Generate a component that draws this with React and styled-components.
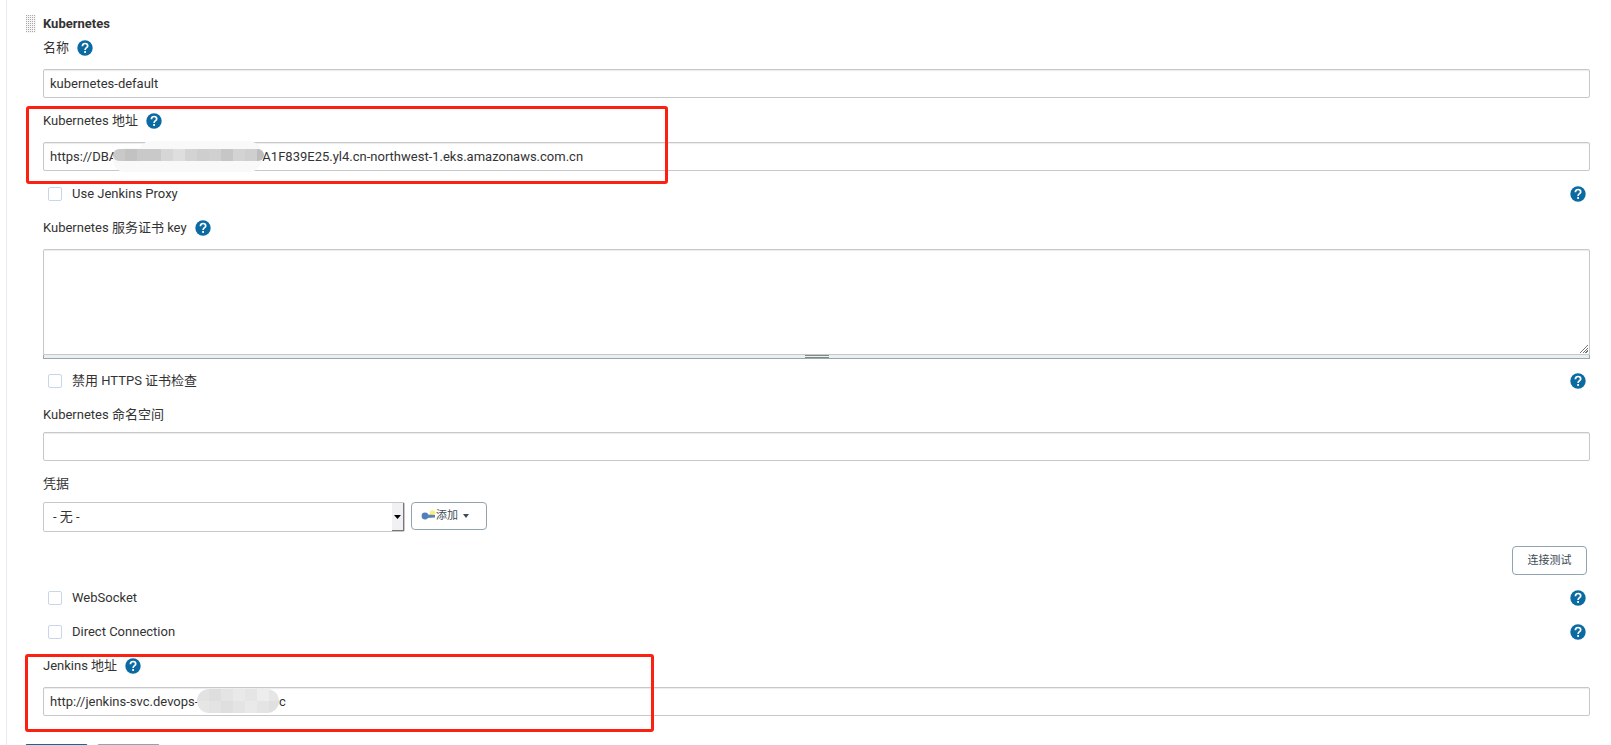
import React from 'react';
import styled, { createGlobalStyle } from 'styled-components';

const GlobalStyles = createGlobalStyle`
    * {
        box-sizing: border-box;
    }

    body {
        margin: 0;
        background: white;
        color: #333;
        font-family: Roboto, 'Noto Sans CJK SC', sans-serif;
        font-size: 13px;
        line-height: 18px;
        overflow: hidden;
    }

    input, select, textarea, button {
        font: inherit;
        color: inherit;
        margin: 0;
    }
`

const Page = styled.div`
    margin-left: 6px;
    padding: 15px 21px 0 19px;
    border-left: 1px solid #e6ecef;
`

const Block = styled.form`
    display: flex;
    align-items: flex-start;
    gap: 7px;
`

const Handle = styled.svg`
    flex: none;
    width: 10px;
    height: 18px;
`

const Fields = styled.div`
    flex: 1;
    min-width: 0;
`

const Title = styled.h3`
    margin: 0;
    height: 21px;
    font-size: 13px;
    font-weight: 700;
    line-height: 18px;
`

const Field = styled.div`
    position: relative;
    margin-bottom: ${(props) => props.$space || '11px'};
`

const LabelRow = styled.div`
    display: flex;
    align-items: center;
    gap: 8px;
    height: 24px;
    margin-bottom: ${(props) => (props.$compact ? '5px' : '9px')};
`

const TextInput = styled.input`
    display: block;
    width: 100%;
    height: 29px;
    padding: 0 6px;
    border: 1px solid #c8c8c8;
    border-radius: 2px;
    box-shadow: inset 0 1px 1px #ececec;
    background: white;
`

const TextArea = styled.textarea`
    display: block;
    width: 100%;
    height: 106px;
    padding: 6px;
    border: 1px solid #c8c8c8;
    border-radius: 2px 2px 0 0;
    box-shadow: inset 0 1px 1px #ececec;
    resize: vertical;

    &::-webkit-resizer {
        background:
            linear-gradient(135deg, white 50%, transparent 50%) right 1px bottom 1px / 10px 10px no-repeat,
            repeating-linear-gradient(135deg, #777 0 1px, white 1px 2px) right 1px bottom 1px / 10px 10px no-repeat;
    }
`

const Grip = styled.div`
    display: flex;
    justify-content: center;
    height: 4px;
    border: 1px solid #98a6ad;
    border-top: 0;
    background: #eaeff2;

    &::after {
        content: '';
        width: 24px;
        border-top: 1px solid #7f8c85;
        border-bottom: 1px solid #7f8c85;
    }
`

const CheckRow = styled.div`
    display: flex;
    align-items: center;
    height: 24px;
    margin-bottom: 10px;
    padding: 0 4px 0 5px;
`

const CheckLabel = styled.label`
    flex: 1;
    padding-left: 10px;
`

const Checkbox = styled.input`
    appearance: none;
    width: 14px;
    height: 14px;
    border: 1px solid #cbd5ea;
    border-radius: 2px;
    background: white;

    &:checked {
        background: #0b6aa2;
    }
`

const HelpLink = styled.a`
    display: flex;
`

const Credentials = styled.div`
    display: flex;
    align-items: flex-start;
    gap: 6px;
    padding-top: 1px;
`

const SelectBox = styled.div`
    position: relative;
    width: 362px;
`

const Select = styled.select`
    appearance: none;
    display: block;
    width: 100%;
    height: 30px;
    padding: 0 20px 0 9px;
    border: 1px solid #c8c8c8;
    border-radius: 2px;
    background: white;
`

const SelectArrow = styled.span`
    position: absolute;
    top: 1px;
    right: 1px;
    bottom: 1px;
    display: flex;
    align-items: center;
    justify-content: center;
    width: 12px;
    border-right: 1px solid #777;
    border-bottom: 1px solid #777;
    background: #f1f1f4;
    pointer-events: none;
`

const Button = styled.button`
    display: flex;
    align-items: center;
    justify-content: center;
    width: 75px;
    height: 29px;
    padding: 0;
    border: 1px solid #8fa3b0;
    border-radius: 4px;
    background: white;
    color: #404b55;
    font-size: 11px;
`

const AddButton = styled(Button)`
    justify-content: flex-start;
    width: 76px;
    height: 28px;
    padding-left: 9px;
`

const Caret = styled.svg`
    margin-left: 5px;
`

const TestRow = styled.div`
    display: flex;
    justify-content: flex-end;
    margin: 14px 3px 11px 0;
`

const Highlight = styled.div`
    position: absolute;
    top: ${(props) => props.$top};
    left: ${(props) => props.$left};
    width: ${(props) => props.$width};
    height: 78px;
    border: 3px solid #fc2013;
    border-radius: 3px;
    pointer-events: none;
`

const Mosaic = styled.svg`
    position: absolute;
    left: ${(props) => props.$left};
    bottom: -2px;
    pointer-events: none;
`

const Footer = styled.div`
    display: flex;
    gap: 9px;
    padding-top: 17px;
    margin-left: -1px;
`

const FooterButton = styled.button`
    width: 63px;
    height: 28px;
    border: 1px solid ${(props) => (props.$primary ? '#0b6aa2' : '#8fa3b0')};
    border-radius: 2px;
    background: ${(props) => (props.$primary ? '#0b6aa2' : 'white')};
`

const addressMosaic = ['#c9c9c9', '#c2c2c2', '#c9c9c9', '#c9c9c9', '#d6d6d6', '#dedede', '#d3d3d3', '#cecece', '#d0d0d0', '#c6c6c6', '#d3d3d3', '#cfcfcf', '#bdbdbd'];

const jenkinsMosaic = [
    ['#e2e2e2', '#dedede', '#e4e4e4', '#e9e9e9', '#e5e5e5', '#ededed', '#e6e6e6'],
    ['#e6e6e6', '#e3e3e3', '#dfdfdf', '#e4e4e4', '#e9e9e9', '#e4e4e4', '#e0e0e0'],
];

function Help() {
    return (
        <HelpLink href="#help" aria-label="Help">
            <svg width="16" height="16" viewBox="0 0 16 16">
                <circle cx="8" cy="8" r="7.7" fill="#0b6aa2" />
                <path d="M5.4 6.2C5.4 4.5 6.5 3.5 8.1 3.5S10.7 4.5 10.7 5.9C10.7 7.6 8.1 7.8 8.1 9.9" fill="none" stroke="white" strokeWidth="1.7" />
                <rect x="7.2" y="11" width="1.8" height="1.9" fill="white" />
            </svg>
        </HelpLink>
    );
}

function FieldLabel({ id, text, help }) {
    return (
        <LabelRow $compact={!help}>
            <label htmlFor={id}>{text}</label>
            {help && <Help />}
        </LabelRow>
    );
}

function CheckField({ id, text }) {
    return (
        <CheckRow>
            <Checkbox type="checkbox" id={id} />
            <CheckLabel htmlFor={id}>{text}</CheckLabel>
            <Help />
        </CheckRow>
    );
}

function DragHandle() {
    const dots = [];
    for (let y = 0; y < 18; y += 2) {
        for (let x = 0; x < 10; x += 2) {
            dots.push(<rect key={`${x}-${y}`} x={x} y={y} width="1" height="1" />);
        }
    }
    return <Handle fill="#a8a8a8"><rect width="10" height="18" fill="#f6f6f6" />{dots}</Handle>;
}

export default function App() {
    return (
        <Page>
            <GlobalStyles />
            <Block>
                <DragHandle />
                <Fields>
                    <Title>Kubernetes</Title>

                    <Field>
                        <FieldLabel id="name" text="名称" help />
                        <TextInput id="name" defaultValue="kubernetes-default" />
                    </Field>

                    <Field>
                        <FieldLabel id="server" text="Kubernetes 地址" help />
                        <TextInput
                            id="server"
                            defaultValue={`https://DBA${' '.repeat(45)}A1F839E25.yl4.cn-northwest-1.eks.amazonaws.com.cn`}
                        />
                        <Mosaic $left="70px" width="152" height="32">
                            <clipPath id="strip"><rect y="8" width="151" height="12" rx="6" /></clipPath>
                            <rect x="0" y="7" width="148" height="24" rx="12" fill="#f9f9f9" />
                            <rect x="24" y="0" width="126" height="30" rx="15" fill="#f9f9f9" />
                            <g clipPath="url(#strip)">
                                {addressMosaic.map((color, i) => (
                                    <rect key={i} x={i * 12} y="8" width="12" height="12" fill={color} />
                                ))}
                            </g>
                        </Mosaic>
                        <Highlight $top="-3px" $left="-17px" $width="642px" />
                    </Field>

                    <CheckField id="proxy" text="Use Jenkins Proxy" />

                    <Field $space="10px">
                        <FieldLabel id="cert" text="Kubernetes 服务证书 key" help />
                        <TextArea id="cert" />
                        <Grip />
                    </Field>

                    <CheckField id="skip-tls" text="禁用 HTTPS 证书检查" />

                    <Field>
                        <FieldLabel id="namespace" text="Kubernetes 命名空间" />
                        <TextInput id="namespace" />
                    </Field>

                    <Field>
                        <FieldLabel id="credentials" text="凭据" />
                        <Credentials>
                            <SelectBox>
                                <Select id="credentials">
                                    <option>- 无 -</option>
                                </Select>
                                <SelectArrow>
                                    <svg width="7" height="4"><path d="M0 0h7L3.5 4z" /></svg>
                                </SelectArrow>
                            </SelectBox>
                            <AddButton type="button">
                                <svg width="15" height="12" viewBox="0 0 15 12">
                                    <circle cx="11.5" cy="3" r="2.8" fill="#f8ee7a" />
                                    <circle cx="4" cy="6" r="3.4" fill="#4f7fbd" />
                                    <path d="M6 4.5L14 5v2.4L6 8z" fill="#5b83b5" />
                                </svg>
                                添加
                                <Caret width="6" height="4"><path d="M0 0h6L3 4z" fill="#404b55" /></Caret>
                            </AddButton>
                        </Credentials>
                    </Field>

                    <TestRow>
                        <Button type="button">连接测试</Button>
                    </TestRow>

                    <CheckField id="websocket" text="WebSocket" />
                    <CheckField id="direct" text="Direct Connection" />

                    <Field>
                        <FieldLabel id="jenkins" text="Jenkins 地址" help />
                        <TextInput
                            id="jenkins"
                            defaultValue={`http://jenkins-svc.devops-${' '.repeat(25)}c`}
                        />
                        <Mosaic $left="154px" width="82" height="29">
                            <clipPath id="pill"><rect width="82" height="24" rx="12" /></clipPath>
                            <g clipPath="url(#pill)">
                                {jenkinsMosaic.map((row, y) => row.map((color, x) => (
                                    <rect key={`${x}-${y}`} x={x * 12} y={y * 12} width="12" height="12" fill={color} />
                                )))}
                            </g>
                        </Mosaic>
                        <Highlight $top="0" $left="-18px" $width="629px" />
                    </Field>
                </Fields>
            </Block>
            <Footer>
                <FooterButton type="button" $primary aria-label="Save" />
                <FooterButton type="button" aria-label="Apply" />
            </Footer>
        </Page>
    );
}
